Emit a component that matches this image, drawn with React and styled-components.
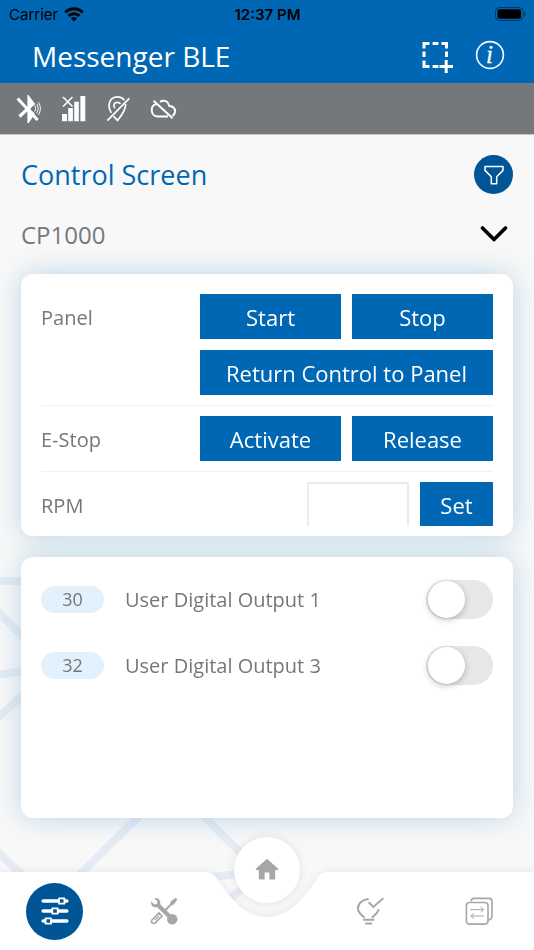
import React, { useState } from "react";
import { createGlobalStyle, styled } from "styled-components";

const GlobalStyle = createGlobalStyle`
  * {
    box-sizing: border-box;
  }

  body {
    margin: 0;
    background: #f8f8f8;
    font-family: "Open Sans", "Noto Sans", sans-serif;
    color: #74787b;
  }

  button, input, select {
    font-family: inherit;
  }
`;

const Page = styled.div`
  position: relative;
  display: flex;
  flex-direction: column;
  height: 100vh;
  min-height: 720px;
  overflow: hidden;
`;

const Pattern = styled.svg`
  position: absolute;
  left: 0;
  bottom: 0;
  z-index: -1;
  width: 300px;
  height: 400px;
`;

const StatusBar = styled.div`
  display: grid;
  grid-template-columns: 1fr auto 1fr;
  align-items: center;
  height: 28px;
  padding: 0 8px 0 9px;
  background: #0067b5;
  color: #000;
  font-family: Inter, sans-serif;
  font-size: 15px;
`;

const Carrier = styled.span`
  display: flex;
  align-items: center;
  gap: 6px;
`;

const Clock = styled.span`
  font-weight: 600;
`;

const Battery = styled.svg`
  justify-self: end;
`;

const TopBar = styled.header`
  display: flex;
  align-items: center;
  gap: 19px;
  height: 55px;
  padding: 0 28px 0 32px;
  background: #0067b5;
`;

const AppName = styled.h1`
  flex: 1;
  margin: 0;
  font-size: 28px;
  font-weight: 400;
  line-height: 38px;
  color: #fff;
`;

const IconButton = styled.button`
  display: flex;
  padding: 0;
  border: 0;
  background: none;
  cursor: pointer;
`;

const Signals = styled.div`
  display: flex;
  align-items: center;
  gap: 17px;
  height: 52px;
  padding: 0 14px;
  background: #74787b;
  border-bottom: 1px solid #c5c7c8;
`;

const Main = styled.main`
  flex: 1;
  display: flex;
  flex-direction: column;
  gap: 20px;
  min-height: 0;
  padding: 20px 21px 54px;
`;

const TitleRow = styled.div`
  display: flex;
  align-items: center;
  justify-content: space-between;
`;

const Title = styled.h2`
  margin: 0;
  font-size: 27px;
  font-weight: 400;
  line-height: 39px;
  color: #0067b5;
`;

const FilterButton = styled.button`
  display: flex;
  align-items: center;
  justify-content: center;
  width: 39px;
  height: 39px;
  padding: 0;
  border: 0;
  border-radius: 50%;
  background: #005596;
  cursor: pointer;
`;

const Picker = styled.div`
  display: grid;
  align-items: center;

  > * {
    grid-area: 1 / 1;
  }

  svg {
    justify-self: end;
    margin-right: 5px;
    pointer-events: none;
  }
`;

const PanelSelect = styled.select`
  width: 100%;
  height: 40px;
  padding: 0;
  border: 0;
  background: none;
  appearance: none;
  font-size: 24px;
  color: #74787b;
`;

const Cards = styled.div`
  flex: 1;
  display: flex;
  flex-direction: column;
  gap: 21px;
  min-height: 0;
  filter: drop-shadow(0 0 14px rgba(0, 104, 180, 0.24));
`;

const Card = styled.section`
  flex: 1 1 0;
  min-height: 0;
  padding: ${(props) => (props.$list ? "10px 20px 20px" : "20px 20px 10px")};
  border-radius: 12px;
  background: #fff;
`;

const Scroller = styled.div`
  height: 100%;
  overflow: hidden;
`;

const ControlRow = styled.div`
  display: grid;
  grid-template-columns: 159px 1fr;
  margin-bottom: 10px;
  padding-bottom: 10px;
  border-bottom: 1px solid #f1f1f1;

  &:last-child {
    border-bottom: 0;
  }
`;

const RowLabel = styled.label`
  height: 45px;
  font-size: 20px;
  line-height: 48px;
`;

const Buttons = styled.div`
  display: grid;
  grid-template-columns: 1fr 1fr;
  gap: 11px;
`;

const ActionButton = styled.button`
  grid-column: ${(props) => (props.$wide ? "1 / -1" : "auto")};
  height: 45px;
  padding: 0;
  border: 0;
  background: #0067b5;
  color: #fff;
  font-size: 22px;
  cursor: pointer;
`;

const RpmField = styled.div`
  display: grid;
  grid-template-columns: 102px 73px;
  justify-content: end;
  gap: 11px;
`;

const RpmInput = styled.input`
  width: 100%;
  height: 48px;
  padding: 0 8px;
  border: 2px solid #ebebeb;
  background: #fff;
  color: #74787b;
  font-size: 20px;
`;

const OutputRow = styled.div`
  display: flex;
  align-items: center;
  gap: 21px;
  height: 66px;
`;

const Badge = styled.span`
  width: 63px;
  border-radius: 14px;
  background: #e3f1fd;
  font-size: 18px;
  line-height: 27px;
  text-align: center;
`;

const OutputLabel = styled.label`
  flex: 1;
  font-size: 20px;
`;

const Toggle = styled.input`
  appearance: none;
  width: 67px;
  height: 39px;
  margin: 0;
  padding: 1px 2px;
  border-radius: 20px;
  background: ${(props) => (props.checked ? "#0067b5" : "#e7e7e7")};
  cursor: pointer;

  &::before {
    content: "";
    display: block;
    width: 37px;
    height: 37px;
    margin-left: ${(props) => (props.checked ? "26px" : "0")};
    border-radius: 50%;
    background: #fff;
    box-shadow: 0 2px 6px rgba(0, 0, 0, 0.24);
  }
`;

const Nav = styled.nav`
  position: relative;
  display: grid;
  grid-template-columns: 1fr 1fr 96px 1fr 1fr;
  align-items: center;
  justify-items: center;
  height: 78px;
`;

const NavShape = styled.div`
  position: absolute;
  inset: 0;
  z-index: -1;
  display: flex;
  filter: drop-shadow(0 0 4px rgba(0, 0, 0, 0.08));
`;

const NavSide = styled.div`
  flex: 1;
  background: #fff;
`;

const NavButton = styled.button`
  display: flex;
  align-items: center;
  justify-content: center;
  width: 57px;
  height: 57px;
  padding: 0;
  border: 0;
  border-radius: 50%;
  background: ${(props) => (props.$active ? "#005596" : "none")};
  cursor: pointer;
`;

const HomeButton = styled(NavButton)`
  align-self: start;
  width: 66px;
  height: 66px;
  margin-top: -35px;
  background: #fff;
  box-shadow: 0 0 8px rgba(0, 0, 0, 0.1);
`;

const outputs = [
  { id: 30, name: "User Digital Output 1" },
  { id: 32, name: "User Digital Output 3" },
];

function Icon({ size = 28, width = 2, color = "#fff", children }) {
  return (
    <svg
      width={size}
      height={size}
      viewBox={`0 0 ${size} ${size}`}
      fill="none"
      stroke={color}
      strokeWidth={width}
      aria-hidden="true"
    >
      {children}
    </svg>
  );
}

function BackgroundPattern() {
  return (
    <Pattern viewBox="0 550 300 400" fill="none" stroke="#e6ecf4" strokeWidth="8" aria-hidden="true">
      <path d="M0 581H120" />
      <path d="M-10 604L270 882" />
      <path d="M-10 676L120 656" />
      <path d="M-10 725L120 606" />
      <path d="M-10 845L60 910" />
      <path d="M70 884L180 776" />
      <path d="M205 878L267 870L225 902" />
    </Pattern>
  );
}

function PhoneStatus() {
  return (
    <StatusBar>
      <Carrier>
        Carrier
        <svg width="20" height="15" viewBox="0 0 20 15" fill="none" stroke="#000" strokeWidth="3" aria-hidden="true">
          <path d="M1.3 5.4C6.2 .6 13.8 .6 18.7 5.4" />
          <path d="M4.6 8.9C7.7 6 12.3 6 15.4 8.9" />
          <path d="M10 14.4L6.9 11.2C8.7 9.6 11.3 9.6 13.1 11.2Z" fill="#000" stroke="none" />
        </svg>
      </Carrier>
      <Clock>12:37 PM</Clock>
      <Battery width="31" height="15" viewBox="0 0 31 15" aria-hidden="true">
        <rect x=".5" y=".5" width="27.5" height="13" rx="4" fill="none" stroke="#000" strokeOpacity=".45" />
        <rect x="2.5" y="2.2" width="23.5" height="9.6" rx="2" />
        <path d="M29.2 4.8C31.3 5.6 31.3 8.4 29.2 9.2Z" fillOpacity=".45" />
      </Battery>
    </StatusBar>
  );
}

function SignalIcons() {
  return (
    <Signals>
      <Icon>
        <path d="M5.5 21.5L19 8.8L15 3.4V24.8L18.8 19L14 14" strokeWidth="3.2" />
        <path d="M3.6 3.6L23.6 25" strokeWidth="3" />
        <path d="M20.6 10.5C22 12.5 22 14.6 20.6 16.5M22.6 8.8C24.6 11.8 24.6 15.2 22.6 18.2M24.4 7.2C27 11 27 16 24.4 19.8" strokeWidth="1" />
      </Icon>
      <Icon>
        <path d="M3 19H8V26.3H3ZM9.2 13H13.9V26.3H9.2ZM15.2 6.7H19.8V26.3H15.2ZM21.4 1H26.3V26.3H21.4Z" fill="#fff" stroke="none" />
        <path d="M4 2L13.5 11.5M13.5 2L4 11.5" strokeWidth="1.6" />
      </Icon>
      <Icon width={1.7}>
        <path d="M7.2 17.8C5.8 15.2 5 12.7 5 10.2C5 5.2 8.7 1.8 13.3 1.8C16.2 1.8 18.8 3 20.3 5.2M21.6 9C22.2 15 17.3 20.8 13.5 25.4L9.5 21.2" />
        <path d="M10.8 13.2C8.7 10.4 10.3 7.3 13.3 7.3C14.6 7.3 15.8 7.9 16.3 9" />
        <path d="M3.3 25.7L25.3 3.3" />
      </Icon>
      <Icon width={2}>
        <path d="M8 9C4.5 9.5 2.7 12 2.7 15C2.7 19 5.6 21.5 9 21.5H19" />
        <path d="M11 6.8C15 4.2 19.4 6.4 20.3 11C24.4 11 26.4 14 26 17C25.7 18.9 24.8 20 23.5 20.8" />
        <path d="M4.6 5.8L23.6 23.2" />
      </Icon>
    </Signals>
  );
}

function ControlCard() {
  const [rpm, setRpm] = useState("");

  return (
    <Card>
      <Scroller>
        <ControlRow>
          <RowLabel as="span">Panel</RowLabel>
          <Buttons>
            <ActionButton>Start</ActionButton>
            <ActionButton>Stop</ActionButton>
            <ActionButton $wide>Return Control to Panel</ActionButton>
          </Buttons>
        </ControlRow>
        <ControlRow>
          <RowLabel as="span">E-Stop</RowLabel>
          <Buttons>
            <ActionButton>Activate</ActionButton>
            <ActionButton>Release</ActionButton>
          </Buttons>
        </ControlRow>
        <ControlRow>
          <RowLabel htmlFor="rpm">RPM</RowLabel>
          <RpmField>
            <RpmInput id="rpm" value={rpm} onChange={(e) => setRpm(e.target.value)} />
            <ActionButton>Set</ActionButton>
          </RpmField>
        </ControlRow>
      </Scroller>
    </Card>
  );
}

function OutputsCard() {
  const [active, setActive] = useState({});

  return (
    <Card $list>
      {outputs.map((output) => (
        <OutputRow key={output.id}>
          <Badge>{output.id}</Badge>
          <OutputLabel htmlFor={`output-${output.id}`}>{output.name}</OutputLabel>
          <Toggle
            type="checkbox"
            id={`output-${output.id}`}
            checked={!!active[output.id]}
            onChange={(e) => setActive({ ...active, [output.id]: e.target.checked })}
          />
        </OutputRow>
      ))}
    </Card>
  );
}

function BottomNav() {
  return (
    <Nav>
      <NavShape>
        <NavSide />
        <svg width="124" height="78" viewBox="0 0 124 78" aria-hidden="true">
          <path d="M0 0C6 0 9 2 13 8C28 31 43 45 62 45C81 45 96 31 111 8C115 2 118 0 124 0V78H0Z" fill="#fff" />
        </svg>
        <NavSide />
      </NavShape>
      <NavButton $active aria-label="Controls">
        <Icon>
          <path d="M2.2 4H25.8M2.2 14H25.8M2.2 24H25.8" strokeWidth="3.6" strokeLinecap="round" />
          <path d="M18 1.3H23.4V6.7H18ZM11.3 11.3H16.7V16.7H11.3ZM4.6 21.3H10V26.7H4.6Z" fill="#005596" strokeWidth="1.8" strokeLinejoin="round" />
        </Icon>
      </NavButton>
      <NavButton aria-label="Tools">
        <Icon color="#a7a7a7">
          <path d="M4.4 1.2C8 .4 11 3.4 10.2 7.2L20.6 17.6L17.6 20.6L7.2 10.2C3.4 11 .4 8 1.2 4.4L4.4 7.4L7 7L7.4 4.4Z" fill="#a7a7a7" stroke="none" />
          <circle cx="22.2" cy="22.2" r="5.2" fill="#a7a7a7" stroke="none" />
          <path d="M27.4 2.4L25.8 .8L20.6 4.6L20 7L13 14L14.4 15.4L21.4 8.4L23.8 7.6Z" fill="#a7a7a7" stroke="none" />
          <path d="M2 23L9 16L12 19L5 26Q3.5 27 2 25.7Q.9 24.4 2 23Z" strokeWidth="1.7" />
          <path d="M4.8 23.2L9 19" strokeWidth="1.2" />
        </Icon>
      </NavButton>
      <HomeButton aria-label="Home">
        <svg width="24" height="24" viewBox="0 0 24 24" fill="#a7a7a7" aria-hidden="true">
          <path d="M11.2 1.4Q12 .8 12.8 1.4L23.2 10.8Q23.6 12 22.6 12H20.2V20.6Q20.2 21.6 19.2 21.6H14.4V14.6H9.6V21.6H4.8Q3.8 21.6 3.8 20.6V12H1.4Q.4 12 .8 10.8Z" />
        </svg>
      </HomeButton>
      <NavButton aria-label="Status">
        <Icon color="#a7a7a7">
          <path d="M12.7 1.9C6.5 2.2 1.9 6.5 1.9 11.6C1.9 15.6 5 17.6 8.6 20.7" />
          <path d="M22.6 12C22.3 15.7 19.5 17.3 16 20.7" />
          <path d="M12.7 5.3L17.3 10L27.3 1.3" />
          <path d="M7 22.7H18.4M9.2 26.6H16.2" />
        </Icon>
      </NavButton>
      <NavButton aria-label="Transfer">
        <Icon color="#a7a7a7" width={1.6}>
          <rect x="1.4" y="5.5" width="21.6" height="21.6" rx="3" />
          <path d="M6 4.4C6.2 2.4 7.2 1.4 9 1.4H24C26 1.4 27 2.4 27 4.4V19C27 21.4 26 22.7 23.6 22.9" />
          <path d="M5.3 12.6H18.6M15.6 10L18.8 12.6L15.6 15.2M18.8 19H6M9 16.4L5.8 19L9 21.6" strokeWidth="1" />
        </Icon>
      </NavButton>
    </Nav>
  );
}

export default function App() {
  return (
    <Page>
      <GlobalStyle />
      <BackgroundPattern />
      <PhoneStatus />
      <TopBar>
        <AppName>Messenger BLE</AppName>
        <IconButton aria-label="Scan">
          <Icon size={34} width={3}>
            <path d="M3 9.5V4.5H8.5M11.6 4.5H17.4M20.5 4.5H25.5V9.5M25.5 12.5V18M3 12.5V18M3 21.5V27.5H8.5M11.6 27.5H17.4M18.5 27.5H32M25.2 21V34" />
          </Icon>
        </IconButton>
        <IconButton aria-label="Information">
          <Icon size={32} width={1.6}>
            <circle cx="16" cy="15" r="13.4" />
            <text
              x="15.6"
              y="22.6"
              textAnchor="middle"
              fill="#fff"
              stroke="#fff"
              strokeWidth=".3"
              fontFamily="Liberation Serif, serif"
              fontStyle="italic"
              fontSize="25"
            >
              i
            </text>
          </Icon>
        </IconButton>
      </TopBar>
      <SignalIcons />
      <Main>
        <TitleRow>
          <Title>Control Screen</Title>
          <FilterButton aria-label="Filter">
            <Icon size={20} width={1.5}>
              <path d="M1 1.5H19V5.4L12.7 11.8V18.8H7.3V11.8L1 5.4Z" strokeLinejoin="round" />
            </Icon>
          </FilterButton>
        </TitleRow>
        <Picker>
          <PanelSelect aria-label="Panel model">
            <option>CP1000</option>
          </PanelSelect>
          <Icon width={3.6} color="#000">
            <path d="M2.5 8L14 19.6L25.5 8" strokeLinecap="round" strokeLinejoin="round" />
          </Icon>
        </Picker>
        <Cards>
          <ControlCard />
          <OutputsCard />
        </Cards>
      </Main>
      <BottomNav />
    </Page>
  );
}
